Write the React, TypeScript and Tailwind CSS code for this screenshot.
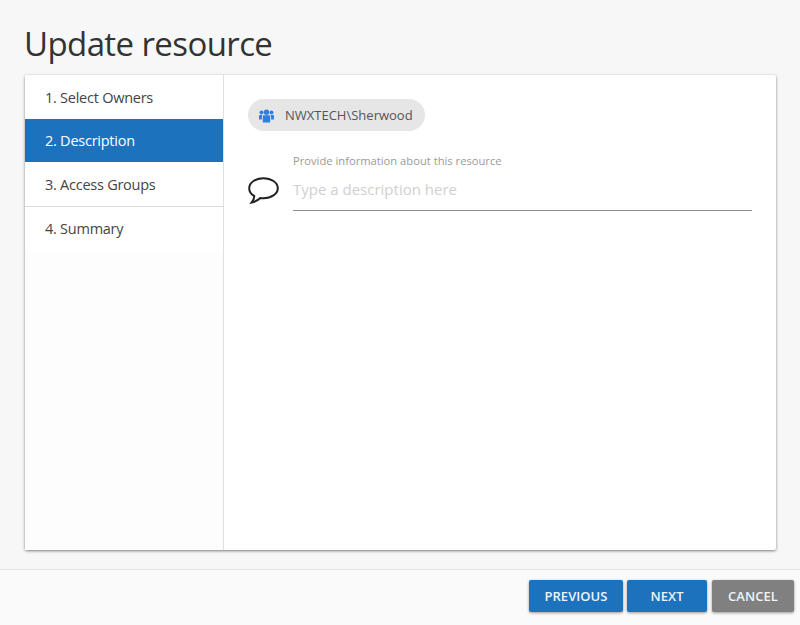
const font = { fontFamily: '"Open Sans", "Noto Sans", sans-serif' };

function Step({ label, active, border, tall }: { label: string; active?: boolean; border?: boolean; tall?: boolean }) {
  const height = border ? "h-[45px] pt-[1px]" : tall ? "h-[44px]" : "h-[43px]";
  if (active) {
    return <div className={`flex items-center bg-[#1c72bd] pl-[20px] text-[14.5px] tracking-[-0.25px] text-white ${height}`}>{label}</div>;
  }
  return (
    <div className={`flex items-center bg-white pl-[20px] text-[14.5px] tracking-[-0.25px] text-[#444] ${height} ${border ? "border-b border-[#dcdcdc]" : ""}`}>
      {label}
    </div>
  );
}

function FooterButton({ label, className }: { label: string; className: string }) {
  return (
    <button className={`h-[32px] rounded-[2px] pt-px text-[13px] font-[550] tracking-[0.05px] text-[#eef4fa] shadow-[0_1px_3px_rgba(0,0,0,0.4)] ${className}`}>
      {label}
    </button>
  );
}

export default function App() {
  return (
    <div className="flex h-[625px] w-[800px] flex-col overflow-hidden bg-[#f7f7f7]" style={font}>
      <div className="flex h-[569px] flex-col pl-[25px]">
        <h1 className="mt-[22px] -ml-px h-[53px] text-[33px] leading-[44px] tracking-[-0.6px] text-[#333]">Update resource</h1>
        <div className="flex h-[475px] w-[751px] rounded-[2px] bg-white shadow-[0_1px_3px_rgba(0,0,0,0.5)]">
          <div className="flex w-[199px] flex-col border-r border-[#e0e0e0] pt-px">
            <Step label="1. Select Owners" />
            <Step label="2. Description" active />
            <Step label="3. Access Groups" border />
            <Step label="4. Summary" tall />
            <div className="flex-1 bg-[#fdfdfd]" />
          </div>
          <div className="flex-1 pt-[24px] pr-[24px] pl-[24px]">
            <div className="flex h-[32px] w-[177px] items-center rounded-full bg-[#e6e6e6] pl-[11px]">
              <svg className="mt-px h-[14px] w-[15px] shrink-0" viewBox="0 0 15 14" fill="#2f7fe0">
                <circle cx="7.500" cy="3.200" r="2.700" />
                <circle cx="2.500" cy="3.600" r="2" />
                <circle cx="12.500" cy="3.600" r="2" />
                <path d="M3.800 7.500C3.800 6.600 4.500 6.300 5.300 6.300H9.700C10.500 6.300 11.200 6.600 11.200 7.500V13.500H3.800Z" />
                <path d="M0 7C0 6.300 0.600 6 1.300 6H3.600C3.100 6.500 2.900 7 2.900 7.700V10.500H0Z" />
                <path d="M15 7C15 6.300 14.400 6 13.700 6H11.400C11.900 6.500 12.100 7 12.100 7.700V10.500H15Z" />
              </svg>
              <span className="ml-[11px] pt-px text-[13px] text-[#555]">NWXTECH\Sherwood</span>
            </div>
            <div className="mt-[14px] flex">
              <svg className="mt-[32px] h-[27px] w-[31px] shrink-0" viewBox="0 0 31 27" fill="none" stroke="#222" strokeWidth="2">
                <path d="M15.500 1.200C8 1.200 1.200 5.300 1.200 11.200C1.200 14.700 3.300 17.300 6.200 18.800C6.300 21 5.300 23.500 3.600 25.600C7 24.800 10.300 23 12.300 21C13.300 21.100 14.400 21.200 15.500 21.200C23 21.200 29.800 17.100 29.800 11.200C29.800 5.300 23 1.200 15.500 1.200Z" />
              </svg>
              <div className="ml-[14px] flex-1">
                <div className="pt-[9px] text-[11.2px] leading-[14px] text-[#9a9a9a]">Provide information about this resource</div>
                <div className="h-[43px] border-b border-[#8f8f8f] pt-[9px] text-[15px] leading-[24px] text-[#d0d0d0]">Type a description here</div>
              </div>
            </div>
          </div>
        </div>
      </div>
      <div className="flex flex-1 items-start justify-end gap-[4px] border-t border-[#e4e4e4] bg-[#fafafa] pt-[10px] pr-[6px]">
        <FooterButton label="PREVIOUS" className="w-[94px] bg-[#1c72bd]" />
        <FooterButton label="NEXT" className="w-[80px] bg-[#1c72bd]" />
        <FooterButton label="CANCEL" className="ml-px w-[82px] bg-[#808080]" />
      </div>
    </div>
  );
}
